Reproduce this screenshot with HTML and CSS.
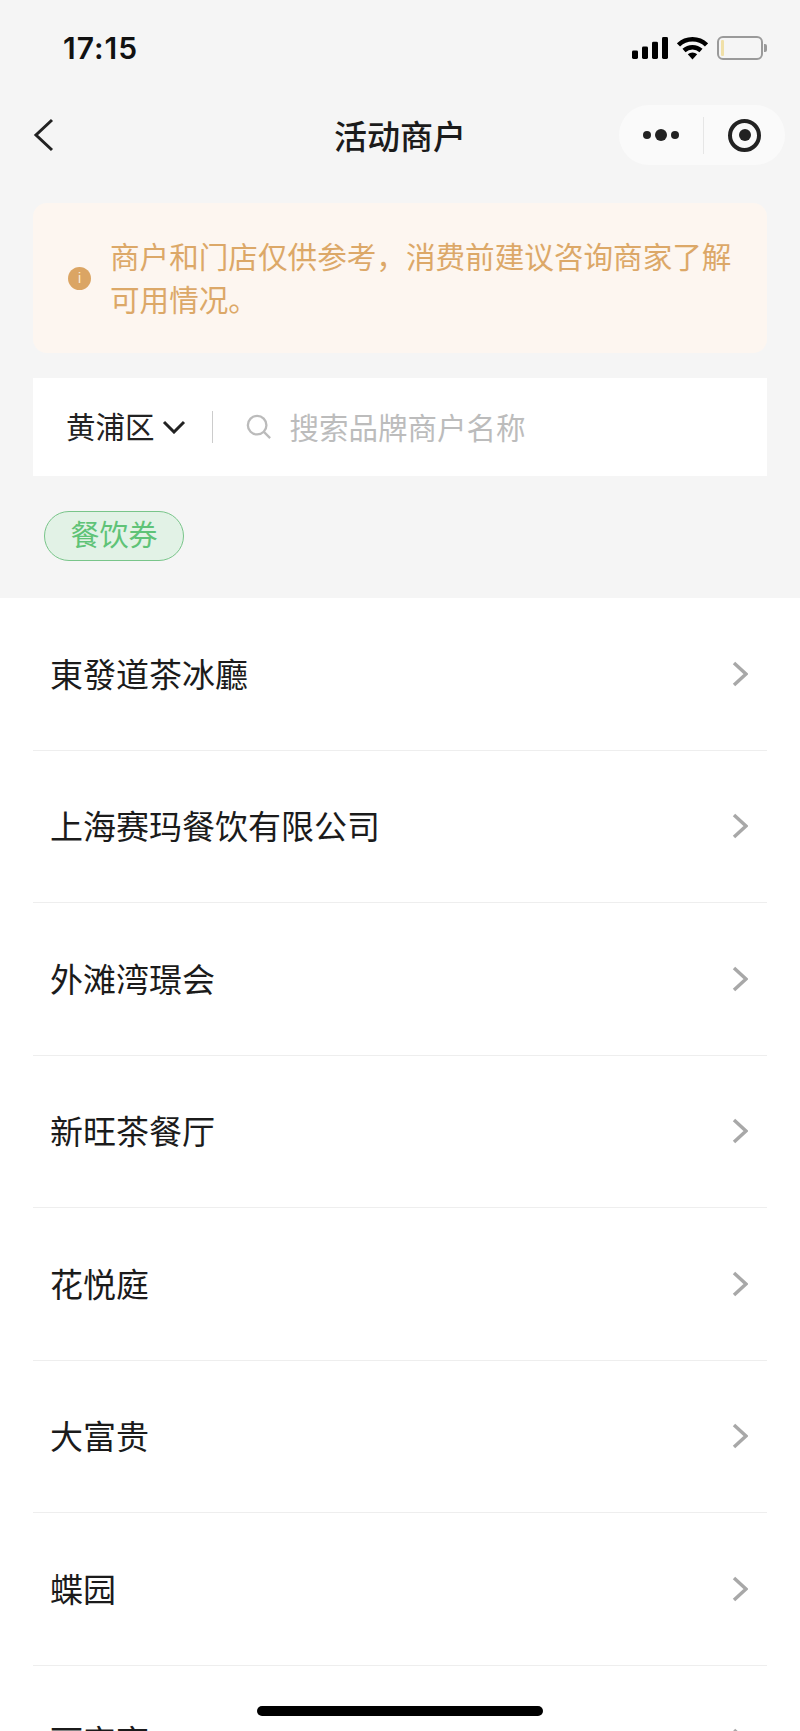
FILE: index.html
```html
<!DOCTYPE html>
<html lang="zh-CN">
<head>
    <meta charset="UTF-8">
    <meta name="viewport" content="width=device-width, initial-scale=1.0">
    <title>活动商户</title>
    <link rel="stylesheet" href="styles.css">
</head>
<body>
    <div class="phone">
        <div class="top-area">
            <div class="status-bar">
                <span class="time">17:15</span>
                <div class="status-icons">
                    <svg width="36" height="22" viewBox="0 0 36 23" preserveAspectRatio="none" class="signal">
                        <rect x="0" y="14" width="6" height="9" rx="1.5"/>
                        <rect x="10" y="10" width="6" height="13" rx="1.5"/>
                        <rect x="20" y="5" width="6" height="18" rx="1.5"/>
                        <rect x="30" y="0" width="6" height="23" rx="1.5"/>
                    </svg>
                    <svg width="31" height="23" viewBox="0 0 31 23" class="wifi">
                        <path d="M1.5 8 A20 20 0 0 1 29.5 8" />
                        <path d="M7 13.5 A12.5 12.5 0 0 1 24 13.5" />
                        <path class="wifi-dot" d="M10.8 17.3 A7 7 0 0 1 20.2 17.3 L15.5 22.5 Z" />
                    </svg>
                    <div class="battery">
                        <div class="battery-body"><span class="battery-level"></span></div>
                        <span class="battery-cap"></span>
                    </div>
                </div>
            </div>
            <div class="nav-bar">
                <svg class="back" width="22" height="34" viewBox="0 0 22 34">
                    <path d="M19 2 L3 17 L19 32" />
                </svg>
                <h1>活动商户</h1>
                <div class="capsule">
                    <div class="more"><i></i><b></b><i></i></div>
                    <span class="capsule-line"></span>
                    <div class="target"><span></span></div>
                </div>
            </div>
            <div class="notice">
                <span class="notice-icon">i</span>
                <p>商户和门店仅供参考，消费前建议咨询商家了解可用情况。</p>
            </div>
            <div class="search-bar">
                <span class="district">黄浦区</span>
                <svg class="caret" width="24" height="14" viewBox="0 0 24 14">
                    <path d="M2 2 L12 12 L22 2" />
                </svg>
                <span class="search-line"></span>
                <svg class="search-icon" width="26" height="26" viewBox="0 0 28 28">
                    <circle cx="12" cy="12" r="10" />
                    <path d="M19.5 19.5 L26 26" />
                </svg>
                <span class="placeholder">搜索品牌商户名称</span>
            </div>
            <div class="tags">
                <span class="tag">餐饮券</span>
            </div>
        </div>
        <ul class="shop-list">
            <li><span>東發道茶冰廳</span><svg class="arrow" width="16" height="26" viewBox="0 0 16 26"><path d="M2 2 L14 13 L2 24" /></svg></li>
            <li><span>上海赛玛餐饮有限公司</span><svg class="arrow" width="16" height="26" viewBox="0 0 16 26"><path d="M2 2 L14 13 L2 24" /></svg></li>
            <li><span>外滩湾璟会</span><svg class="arrow" width="16" height="26" viewBox="0 0 16 26"><path d="M2 2 L14 13 L2 24" /></svg></li>
            <li><span>新旺茶餐厅</span><svg class="arrow" width="16" height="26" viewBox="0 0 16 26"><path d="M2 2 L14 13 L2 24" /></svg></li>
            <li><span>花悦庭</span><svg class="arrow" width="16" height="26" viewBox="0 0 16 26"><path d="M2 2 L14 13 L2 24" /></svg></li>
            <li><span>大富贵</span><svg class="arrow" width="16" height="26" viewBox="0 0 16 26"><path d="M2 2 L14 13 L2 24" /></svg></li>
            <li><span>蝶园</span><svg class="arrow" width="16" height="26" viewBox="0 0 16 26"><path d="M2 2 L14 13 L2 24" /></svg></li>
            <li><span>丽宫亭</span><svg class="arrow" width="16" height="26" viewBox="0 0 16 26"><path d="M2 2 L14 13 L2 24" /></svg></li>
        </ul>
        <div class="home-bar"></div>
    </div>
</body>
</html>
```

FILE: styles.css
```css
* {
    margin: 0;
    padding: 0;
    box-sizing: border-box;
}

html,
body {
    height: 100%;
    overflow: hidden;
}

body {
    background-color: #fff;
    font-family: "Noto Sans CJK SC", "Noto Sans", sans-serif;
    color: #1b1b1b;
}

.phone {
    position: relative;
    width: 800px;
    height: 1731px;
    overflow: hidden;
}

.top-area {
    background-color: #f5f5f5;
    height: 598px;
    padding: 0 33px;
}

.status-bar {
    display: flex;
    justify-content: space-between;
    align-items: center;
    height: 96px;
    padding: 0 0 0 30px;
}

.time {
    font-family: Inter, "Liberation Sans", sans-serif;
    font-size: 30px;
    font-weight: 600;
    letter-spacing: 1px;
    color: #111;
}

.status-icons {
    display: flex;
    align-items: center;
    gap: 9px;
}

.signal {
    fill: #000;
}

.wifi path {
    fill: none;
    stroke: #000;
    stroke-width: 4.5;
}

.wifi .wifi-dot {
    fill: #000;
    stroke: none;
}

.battery {
    display: flex;
    align-items: center;
    gap: 1px;
}

.battery-body {
    width: 46px;
    height: 24px;
    border: 2px solid #9a9a9a;
    border-radius: 6px;
    padding: 2px;
}

.battery-level {
    display: block;
    width: 3px;
    height: 100%;
    background-color: #f0e0a8;
    border-radius: 1px;
}

.battery-cap {
    width: 3px;
    height: 8px;
    background-color: #9a9a9a;
    border-radius: 0 2px 2px 0;
}

.nav-bar {
    position: relative;
    display: flex;
    justify-content: space-between;
    align-items: center;
    height: 78px;
}

.back {
    fill: none;
    stroke: #222;
    stroke-width: 3;
}

.nav-bar h1 {
    position: absolute;
    left: -33px;
    right: -33px;
    text-align: center;
    font-size: 33px;
    font-weight: 500;
}

.capsule {
    display: flex;
    align-items: center;
    width: 166px;
    height: 60px;
    background-color: #fafafa;
    border-radius: 30px;
    margin-right: -18px;
}

.more {
    display: flex;
    align-items: center;
    justify-content: center;
    gap: 4px;
    width: 84px;
}

.more i {
    width: 8px;
    height: 8px;
    background-color: #222;
    border-radius: 50%;
}

.more b {
    width: 12px;
    height: 12px;
    background-color: #222;
    border-radius: 50%;
}

.capsule-line {
    width: 1px;
    height: 37px;
    background-color: #e6e6e6;
}

.target {
    display: flex;
    align-items: center;
    justify-content: center;
    width: 33px;
    height: 33px;
    margin-left: 24px;
    border: 4px solid #222;
    border-radius: 50%;
}

.target span {
    width: 12px;
    height: 12px;
    background-color: #222;
    border-radius: 50%;
}

.notice {
    display: flex;
    align-items: center;
    height: 150px;
    margin-top: 29px;
    padding: 0 30px 0 35px;
    background-color: #fdf6f0;
    border-radius: 14px;
}

.notice-icon {
    flex: none;
    width: 23px;
    height: 23px;
    margin-right: 19px;
    background-color: #dba564;
    border-radius: 50%;
    color: #fbeedd;
    font-family: "Liberation Sans", sans-serif;
    font-size: 14px;
    line-height: 23px;
    text-align: center;
}

.notice p {
    margin-top: -3px;
    color: #dca868;
    font-size: 29.6px;
    line-height: 43px;
}

.search-bar {
    display: flex;
    align-items: center;
    height: 98px;
    margin-top: 25px;
    padding-left: 33px;
    background-color: #fff;
}

.district {
    margin-top: -4px;
    font-size: 29.5px;
    color: #222;
}

.caret {
    margin-left: 7px;
    fill: none;
    stroke: #222;
    stroke-width: 3;
}

.search-line {
    width: 1px;
    height: 32px;
    margin-left: 26px;
    background-color: #ccc;
}

.search-icon {
    margin-left: 33px;
    fill: none;
    stroke: #bbb;
    stroke-width: 2.5;
}

.placeholder {
    margin-top: -3px;
    margin-left: 18px;
    font-size: 29.5px;
    color: #bcbcbc;
}

.tags {
    display: flex;
    margin-top: 35px;
    padding-left: 11px;
}

.tag {
    width: 140px;
    height: 50px;
    background-color: #e2f2e6;
    border: 1px solid #79c58a;
    border-radius: 25px;
    color: #5fc377;
    font-size: 29px;
    line-height: 43px;
    text-align: center;
}

.shop-list {
    list-style: none;
    padding: 0 33px;
}

.shop-list li {
    display: flex;
    justify-content: space-between;
    align-items: center;
    height: 152.5px;
    padding: 0 19px 0 17px;
    border-bottom: 1px solid #eee;
    font-size: 33px;
    color: #1b1b1b;
}

.shop-list li span {
    margin-top: -2px;
}

.arrow {
    fill: none;
    stroke: #a8a8a8;
    stroke-width: 3.5;
}

.home-bar {
    position: absolute;
    left: 257px;
    bottom: 15px;
    width: 286px;
    height: 10px;
    background-color: #000;
    border-radius: 5px;
}
```
